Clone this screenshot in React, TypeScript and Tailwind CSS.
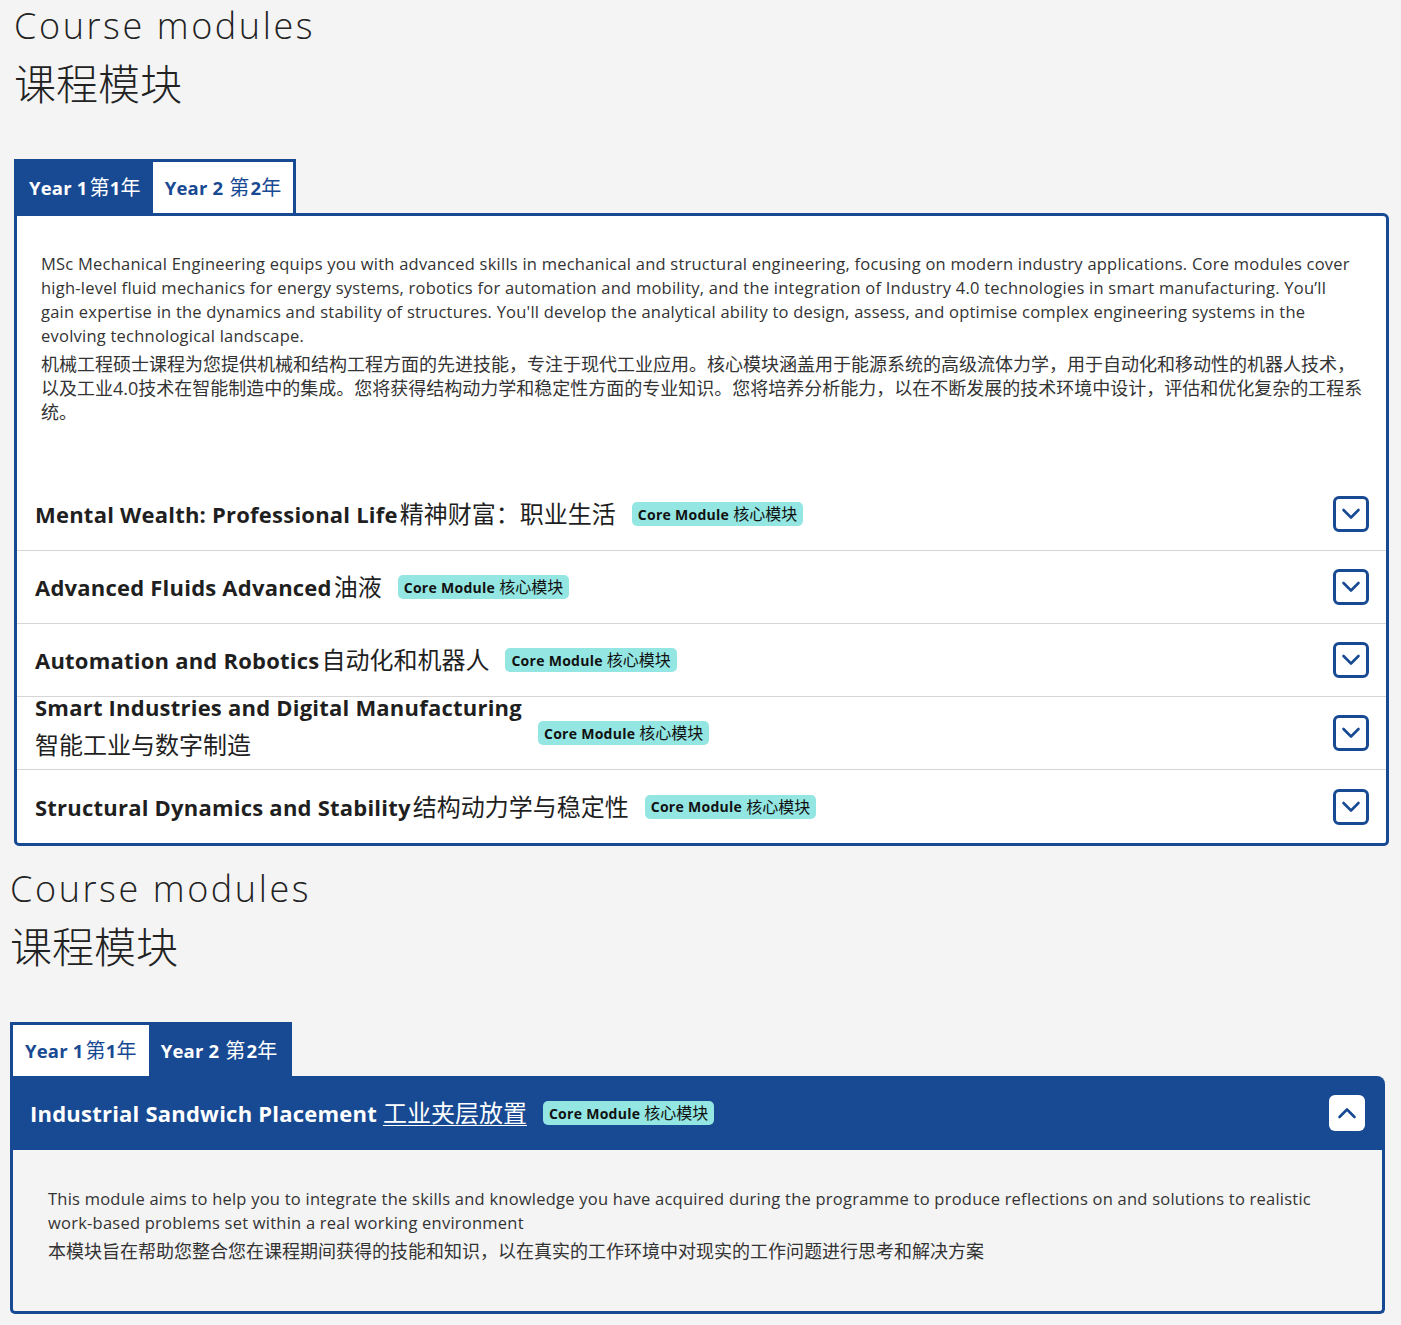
import React from 'react'

const BLUE = 'bg-[#184a93]'

type Module = {
  en: string
  zh: string
  twoLine?: boolean
}

const YEAR_ONE: Module[] = [
  { en: 'Mental Wealth: Professional Life', zh: '精神财富：职业生活' },
  { en: 'Advanced Fluids Advanced', zh: '油液' },
  { en: 'Automation and Robotics', zh: '自动化和机器人' },
  { en: 'Smart Industries and Digital Manufacturing', zh: '智能工业与数字制造', twoLine: true },
  { en: 'Structural Dynamics and Stability', zh: '结构动力学与稳定性' },
]

function Chevron({ up, className }: { up?: boolean; className?: string }) {
  return (
    <svg width="20" height="12" viewBox="0 0 20 12" fill="none" stroke="currentColor" strokeWidth="2.6" strokeLinecap="round" strokeLinejoin="round" className={className} aria-hidden="true">
      {up ? <path d="M2.5 10 L10 2.5 L17.5 10" /> : <path d="M2.5 2 L10 9.5 L17.5 2" />}
    </svg>
  )
}

function Badge() {
  return (
    <span className="inline-flex shrink-0 items-center h-[24px] px-[6px] rounded-[5px] bg-[#93e6e2] text-[#111] text-[14px] font-bold tracking-[0.02em] whitespace-nowrap">
      Core Module <span className="font-normal text-[16px] ml-[4px] tracking-normal">核心模块</span>
    </span>
  )
}

function Tabs({ active }: { active: 1 | 2 }) {
  const tab = (n: 1 | 2) => {
    const on = n === active
    return (
      <button
        type="button"
        className={`h-[51px] px-[12px] text-[18.5px] font-bold tracking-[0.01em] flex items-center ${on ? 'bg-[#184a93] text-white' : 'bg-white text-[#184a93]'}`}
      >
        Year {n}
        <span className={`font-normal text-[20px] ${n === 2 ? 'ml-[6px] mr-[1px]' : 'ml-[2px]'}`}>第</span>
        {n}
        <span className="font-normal text-[20px]">年</span>
      </button>
    )
  }
  return (
    <div className={`inline-flex ${BLUE} pt-[3px] px-[3px]`}>
      {tab(1)}
      {tab(2)}
    </div>
  )
}

function Heading() {
  return (
    <>
      <h2 className="pt-[4px] text-[36px] leading-[44px] font-light tracking-[0.072em] text-[#222]">Course modules</h2>
      <p className="mt-[10px] text-[42px] leading-[52px] font-light text-[#222]">课程模块</p>
    </>
  )
}

function ModuleRow({ m, last }: { m: Module; last: boolean }) {
  return (
    <div className={`h-[73px] pl-[18px] pr-[17px] flex items-center justify-between ${last ? '' : 'border-b border-[#d6d6d6]'}`}>
      <div className="flex items-center gap-[16px]">
        {m.twoLine ? (
          <h3 className="mb-[14px] text-[22px] leading-[37px] font-bold text-[#1f1f1f] tracking-[0.01em]">
            {m.en}
            <span className="block font-normal text-[24px] tracking-normal">{m.zh}</span>
          </h3>
        ) : (
          <h3 className="text-[22px] leading-[36px] font-bold text-[#1f1f1f] tracking-[0.01em] whitespace-nowrap">
            {m.en}
            <span className="ml-[2px] font-normal text-[24px] tracking-normal">{m.zh}</span>
          </h3>
        )}
        <Badge />
      </div>
      <button type="button" aria-label="Expand" className="w-[36px] h-[36px] rounded-[6px] border-[3px] border-[#184a93] text-[#184a93] flex items-center justify-center">
        <Chevron />
      </button>
    </div>
  )
}

export default function App() {
  return (
    <div className="min-h-screen bg-[#f4f4f4] font-['Open_Sans','Noto_Sans_CJK_SC',sans-serif] text-[#333]">
      <section className="ml-[14px] w-[1375px]">
        <Heading />
        <div className="mt-[49px]">
          <Tabs active={1} />
          <div className="bg-white border-[3px] border-[#184a93] rounded-tr-[6px] rounded-b-[5px]">
            <div className="pt-[36px] pb-[54px] pl-[24px] pr-[22px]">
              <p className="mr-[11px] text-[16.5px] leading-[24px] tracking-[0.014em] text-[#333]">
                MSc Mechanical Engineering equips you with advanced skills in mechanical and structural engineering, focusing on modern industry applications. Core modules cover high-level fluid mechanics for energy systems, robotics for automation and mobility, and the integration of Industry 4.0 technologies in smart manufacturing. You’ll gain expertise in the dynamics and stability of structures. You'll develop the analytical ability to design, assess, and optimise complex engineering systems in the evolving technological landscape.
              </p>
              <p className="mt-[4px] text-[18px] leading-[24px] text-[#333]">
                机械工程硕士课程为您提供机械和结构工程方面的先进技能，专注于现代工业应用。核心模块涵盖用于能源系统的高级流体力学，用于自动化和移动性的机器人技术，以及工业4.0技术在智能制造中的集成。您将获得结构动力学和稳定性方面的专业知识。您将培养分析能力，以在不断发展的技术环境中设计，评估和优化复杂的工程系统。
              </p>
            </div>
            {YEAR_ONE.map((m, i) => (
              <ModuleRow key={m.en} m={m} last={i === YEAR_ONE.length - 1} />
            ))}
          </div>
        </div>
      </section>

      <section className="mt-[17px] ml-[10px] w-[1375px] pb-[12px]">
        <Heading />
        <div className="mt-[49px]">
          <Tabs active={2} />
          <div className={`h-[74px] ${BLUE} rounded-tr-[8px] pl-[20px] pr-[20px] flex items-center justify-between`}>
            <div className="flex items-center gap-[16px]">
              <h3 className="text-[22px] leading-[36px] font-bold text-white tracking-[0.01em] whitespace-nowrap">
                Industrial Sandwich Placement{' '}
                <span className="font-normal text-[24px] tracking-normal underline underline-offset-[3px] decoration-1">工业夹层放置</span>
              </h3>
              <Badge />
            </div>
            <button type="button" aria-label="Collapse" className="w-[36px] h-[36px] rounded-[6px] bg-white text-[#184a93] flex items-center justify-center">
              <Chevron up />
            </button>
          </div>
          <div className="bg-[#f4f4f4] border-x-[3px] border-b-[3px] border-[#184a93] rounded-b-[5px] pt-[37px] pb-[48px] pl-[35px] pr-[35px]">
            <p className="text-[16.5px] leading-[24px] tracking-[0.014em] text-[#333]">
              This module aims to help you to integrate the skills and knowledge you have acquired during the programme to produce reflections on and solutions to realistic work-based problems set within a real working environment
            </p>
            <p className="mt-[4px] text-[18px] leading-[24px] text-[#333]">
              本模块旨在帮助您整合您在课程期间获得的技能和知识，以在真实的工作环境中对现实的工作问题进行思考和解决方案
            </p>
          </div>
        </div>
      </section>
    </div>
  )
}
